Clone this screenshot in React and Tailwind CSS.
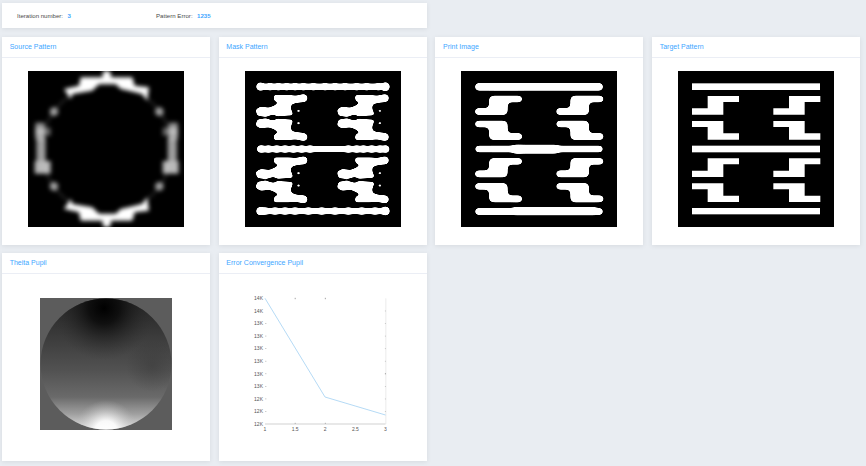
import React from "react";

const BLUE = "text-[#3ea6ff]";

// viewBox is 468 wide: reference zoom pixels, 3 units per screen px
const COLUMNS = [0, 244];
const GROUPS = [0, 187];

const TARGET_TOP = "89,75 183,75 183,93 136,93 136,131 42,131 42,112 89,112";
const TARGET_LOW = "42,150 136,150 136,187 183,187 183,206 89,206 89,168 42,168";

const MASK_TOP =
  "89,75 132,75 152,77 172,73 176,90 152,93 137,98 134,111 141,130 97,133 85,127 62,134 39,131 35,117 47,110 72,113 90,106 106,94 90,87";

function Threshold({ id, blur, slope = 8, shift = -3 }) {
  return (
    <filter
      id={id}
      filterUnits="userSpaceOnUse"
      x="0"
      y="0"
      width="468"
      height="468"
      colorInterpolationFilters="sRGB"
    >
      <feGaussianBlur stdDeviation={blur} />
      <feComponentTransfer>
        <feFuncA type="linear" slope={slope} intercept={shift} />
      </feComponentTransfer>
    </filter>
  );
}

function Repeat({ children }) {
  return GROUPS.map((dy) =>
    COLUMNS.map((dx) => (
      <g key={`${dx}-${dy}`} transform={`translate(${dx},${dy})`}>
        {children}
      </g>
    ))
  );
}

function SourceImage() {
  const top =
    "108,54 153,44 158,19 223,19 226,0 246,0 250,19 313,19 320,44 363,49 358,89 343,69 278,54 263,39 213,39 193,59 133,69 128,84";
  const side = (
    <g fill="white">
      <rect x="22" y="155" width="28" height="50" opacity="0.55" />
      <rect x="25" y="200" width="28" height="70" opacity="0.6" />
      <rect x="22" y="170" width="46" height="24" opacity="0.4" />
      <rect x="20" y="270" width="48" height="38" opacity="0.72" />
      <circle cx="78" cy="122" r="13" opacity="0.6" />
      <circle cx="78" cy="346" r="13" opacity="0.6" />
    </g>
  );
  return (
    <svg viewBox="0 0 468 468" className="w-[156px] h-[156px] bg-black block">
      <defs>
        <filter id="source-blur" x="-10%" y="-10%" width="120%" height="120%">
          <feGaussianBlur stdDeviation="7" />
        </filter>
        <clipPath id="source-clip">
          <rect width="468" height="468" />
        </clipPath>
      </defs>
      <g clipPath="url(#source-clip)">
        <g filter="url(#source-blur)">
          <circle cx="236" cy="234" r="194" fill="none" stroke="white" strokeOpacity="0.12" strokeWidth="8" />
          <polygon points={top} fill="white" />
          <polygon points={top} fill="white" transform="translate(0,468) scale(1,-1)" />
          {side}
          <g transform="translate(472,0) scale(-1,1)">{side}</g>
        </g>
      </g>
    </svg>
  );
}

function MaskImage() {
  const bars = [47, 234, 420];
  const beads = [
    [48, 75, 100, 125, 150, 175, 205, 240, 270, 300, 335, 365, 400],
    [50, 70, 95, 120, 145, 170, 195, 310, 335, 355, 380, 405, 422],
    [48, 60, 90, 120, 150, 190, 230, 270, 310, 350, 390],
  ];
  const shape = (
    <>
      <polygon points={MASK_TOP} stroke="white" strokeWidth="5" strokeLinejoin="round" />
      <circle cx="176" cy="81" r="11" />
    </>
  );
  const cell = (
    <g fill="white">
      {shape}
      <g transform="translate(0,279) scale(1,-1)">{shape}</g>
      <rect x="155" y="116" width="11" height="7" />
      <rect x="155" y="153" width="11" height="7" />
    </g>
  );
  return (
    <svg viewBox="0 0 468 468" className="w-[156px] h-[156px] bg-black block">
      <defs>
        <Threshold id="mask-smooth" blur="2.5" slope="6" shift="-2.2" />
      </defs>
      <g filter="url(#mask-smooth)">
        <Repeat>{cell}</Repeat>
        {bars.map((y, i) => (
          <g key={y} fill="white">
            <rect x="40" y={y - 9} width="385" height="18" />
            {beads[i].map((x) => (
              <circle key={x} cx={x} cy={y} r="11" />
            ))}
            <circle cx="46" cy={y} r={i === 1 ? 10 : 12} />
            <circle cx="421" cy={y} r={i === 1 ? 10 : 13} />
          </g>
        ))}
      </g>
    </svg>
  );
}

function PrintImage() {
  const cell = (
    <>
      <polygon points={TARGET_TOP} fill="white" stroke="white" strokeWidth="2" />
      <polygon points={TARGET_LOW} fill="white" stroke="white" strokeWidth="2" />
      <rect x="84" y="77" width="56" height="52" />
      <rect x="84" y="152" width="56" height="52" />
    </>
  );
  return (
    <svg viewBox="0 0 468 468" className="w-[156px] h-[156px] bg-black block">
      <defs>
        <Threshold id="print-smooth" blur="6.5" slope="10" shift="-4.5" />
      </defs>
      <g filter="url(#print-smooth)" fill="white">
        <Repeat>{cell}</Repeat>
        <rect x="42" y="36" width="384" height="23" />
        <rect x="42" y="224" width="384" height="20" />
        <rect x="156" y="221" width="135" height="27" />
        <rect x="42" y="411" width="384" height="21" />
        <rect x="156" y="408" width="250" height="25" />
      </g>
    </svg>
  );
}

function TargetImage() {
  return (
    <svg viewBox="0 0 468 468" className="w-[156px] h-[156px] bg-black block">
      <g fill="white">
        <Repeat>
          <polygon points={TARGET_TOP} />
          <polygon points={TARGET_LOW} />
        </Repeat>
        <rect x="42" y="37" width="384" height="20" />
        <rect x="42" y="224" width="384" height="20" />
        <rect x="42" y="411" width="384" height="19" />
      </g>
    </svg>
  );
}

function ThetaImage() {
  return (
    <svg viewBox="0 0 132 132" className="w-[132px] h-[132px] block bg-[#5c5c5c]">
      <defs>
        <clipPath id="pupil">
          <circle cx="66" cy="66" r="65.5" />
        </clipPath>
        <linearGradient id="pupil-base" x1="0" y1="0" x2="0" y2="1">
          <stop offset="0" stopColor="#222" />
          <stop offset="0.3" stopColor="#3c3c3c" />
          <stop offset="0.55" stopColor="#525252" />
          <stop offset="0.75" stopColor="#6a6a6a" />
          <stop offset="0.88" stopColor="#a0a0a0" />
          <stop offset="1" stopColor="#e4e4e4" />
        </linearGradient>
        <radialGradient id="pupil-dark" gradientUnits="userSpaceOnUse" cx="64" cy="10" r="52">
          <stop offset="0" stopColor="#000" />
          <stop offset="0.3" stopColor="#0c0c0c" stopOpacity="0.9" />
          <stop offset="1" stopColor="#333" stopOpacity="0" />
        </radialGradient>
        <radialGradient id="pupil-bright" gradientUnits="userSpaceOnUse" cx="66" cy="134" r="32">
          <stop offset="0" stopColor="#fff" />
          <stop offset="0.35" stopColor="#fff" stopOpacity="0.9" />
          <stop offset="1" stopColor="#bbb" stopOpacity="0" />
        </radialGradient>
        <radialGradient id="pupil-spot" gradientUnits="userSpaceOnUse" cx="112" cy="68" r="26">
          <stop offset="0" stopColor="#333" stopOpacity="0.4" />
          <stop offset="1" stopColor="#333" stopOpacity="0" />
        </radialGradient>
      </defs>
      <g clipPath="url(#pupil)">
        <rect width="132" height="132" fill="url(#pupil-base)" />
        <rect width="132" height="132" fill="url(#pupil-dark)" />
        <rect width="132" height="132" fill="url(#pupil-spot)" />
        <rect width="132" height="132" fill="url(#pupil-bright)" />
      </g>
    </svg>
  );
}

function ErrorChart() {
  // svg origin sits at 248,290 in the page
  const yLabels = ["14K", "14K", "13K", "13K", "13K", "13K", "13K", "13K", "12K", "12K", "12K"];
  const xLabels = ["1", "1.5", "2", "2.5", "3"];
  const left = 17;
  const right = 137.5;
  const top = 8.3;
  const bottom = 134;
  return (
    <svg viewBox="0 0 150 150" className="w-[150px] h-[150px] block">
      <rect x={right - 0.5} y={top} width="1.5" height={bottom - top} fill="#f2f2f2" />
      <line x1={left} y1={bottom} x2={right} y2={bottom} stroke="#bdbdbd" strokeWidth="0.7" />
      {yLabels.map((label, i) => {
        const y = top + (i * (bottom - top)) / 10;
        return (
          <g key={i}>
            <text x={left - 2} y={y + 1.8} textAnchor="end" fontSize="5" fill="#555" fontFamily="Liberation Sans, sans-serif">
              {label}
            </text>
            {i > 1 && i < 10 && <rect x={left + 0.3} y={y - 0.3} width="1" height="0.7" fill="#999" />}
            {i > 0 && i < 10 && <rect x={right - 0.6} y={y - 0.3} width="1" height="0.8" fill={i === 6 ? "#777" : "#bbb"} />}
          </g>
        );
      })}
      {xLabels.map((label, i) => {
        const x = left + (i * (right - left)) / 4;
        return (
          <g key={label}>
            <text x={x} y={bottom + 6.5} textAnchor="middle" fontSize="5" fill="#555" fontFamily="Liberation Sans, sans-serif">
              {label}
            </text>
            {(i === 1 || i === 2) && (
              <>
                <rect x={x - 0.4} y={top - 0.5} width="0.9" height="1.4" fill="#999" />
                <rect x={x - 0.4} y={bottom - 1.2} width="0.9" height="1.2" fill="#aaa" />
              </>
            )}
          </g>
        );
      })}
      <polyline points="17,8.3 77,107 137.5,125" fill="none" stroke="#a2d0f2" strokeWidth="0.8" />
    </svg>
  );
}

function Card({ title, pad, children }) {
  return (
    <div className="h-[208px] bg-white shadow-[0_1px_5px_rgba(0,0,0,0.08)]">
      <div className={`h-[20.5px] pl-[7.7px] border-b border-[#ebeef5] text-[7px] leading-[19.5px] ${BLUE}`}>
        {title}
      </div>
      <div className={`flex justify-center ${pad}`}>{children}</div>
    </div>
  );
}

export default function App() {
  return (
    <div
      className="w-[866px] h-[466px] overflow-hidden bg-[#e9edf2] pt-[3px] pl-[2px] text-[#4a4a4a] blur-[0.2px]"
      style={{ fontFamily: '"Liberation Sans", Arial, sans-serif' }}
    >
      <div className="w-[425px] h-[25px] bg-white shadow-[0_1px_5px_rgba(0,0,0,0.08)] flex items-center pl-[15px] text-[6.1px] mb-[9px]">
        <div className="w-[139px] flex gap-[4.5px]">
          <span>Iteration number:</span>
          <span className={`font-bold ${BLUE}`}>3</span>
        </div>
        <div className="flex gap-[4.5px]">
          <span>Pattern Error:</span>
          <span className={`font-bold ${BLUE}`}>1235</span>
        </div>
      </div>

      <div className="grid grid-cols-[repeat(4,208px)] gap-x-[8.67px] gap-y-[8px]">
        <Card title="Source Pattern" pad="pt-[13.5px]">
          <SourceImage />
        </Card>
        <Card title="Mask Pattern" pad="pt-[13.5px]">
          <MaskImage />
        </Card>
        <Card title="Print Image" pad="pt-[13.5px]">
          <PrintImage />
        </Card>
        <Card title="Target Pattern" pad="pt-[13.5px]">
          <TargetImage />
        </Card>
        <Card title="Theita Pupil" pad="pt-[24px]">
          <ThetaImage />
        </Card>
        <Card title="Error Convergence Pupil" pad="pt-[16.5px]">
          <ErrorChart />
        </Card>
      </div>
    </div>
  );
}
